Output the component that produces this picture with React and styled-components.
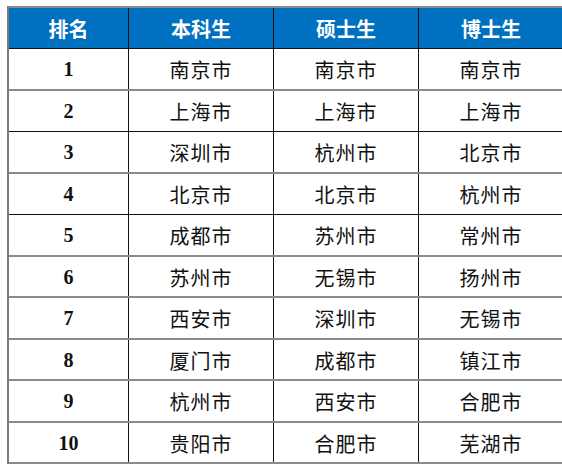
import React from 'react';
import styled, { createGlobalStyle } from 'styled-components';

const GlobalStyle = createGlobalStyle`
  html, body {
    margin: 0;
    padding: 0;
    background: #ffffff;
    overflow: hidden;
  }
  body {
    padding: 6px 0 0 7px;
  }
`;

const rows = [
  ['1', '南京市', '南京市', '南京市'],
  ['2', '上海市', '上海市', '上海市'],
  ['3', '深圳市', '杭州市', '北京市'],
  ['4', '北京市', '北京市', '杭州市'],
  ['5', '成都市', '苏州市', '常州市'],
  ['6', '苏州市', '无锡市', '扬州市'],
  ['7', '西安市', '深圳市', '无锡市'],
  ['8', '厦门市', '成都市', '镇江市'],
  ['9', '杭州市', '西安市', '合肥市'],
  ['10', '贵阳市', '合肥市', '芜湖市'],
];

// a few row rules print darker than the rest in the source
const darkRules = [1, 3];

const Table = styled.div`
  width: 557px;
  border-left: 2px solid #7a7a7a;
  box-sizing: border-box;
`;

const Row = styled.div`
  display: grid;
  grid-template-columns: 120px 145px 145px 145px;
  height: ${p => p.$h}px;
  box-sizing: border-box;
  border-bottom: ${p => (p.$dark ? '1px solid #111111' : '2px solid #8a8a8a')};
`;

const HeadRow = styled(Row)`
  background: #0070c0;
  border-top: 2px solid #8a8a8a;
  border-bottom: 1px solid #111111;
`;

const Cell = styled.div`
  display: flex;
  align-items: center;
  justify-content: center;
  border-right: 1px solid #111111;
  font-family: ${p => (p.$num ? '"Liberation Serif", serif' : '"Noto Sans CJK SC", sans-serif')};
  font-weight: ${p => (p.$num ? 700 : 400)};
  font-size: ${p => (p.$num ? '20px' : '20px')};
  color: #111111;
  letter-spacing: ${p => (p.$num ? '0' : '1px')};
  padding-top: 1px;
`;

const HeadCell = styled(Cell)`
  font-family: "Noto Sans CJK SC", sans-serif;
  font-weight: 700;
  font-size: 20px;
  color: #ffffff;
  letter-spacing: 0;
  padding-top: 0;
`;

export default function App() {
  return (
    <>
      <GlobalStyle />
      <Table>
        <HeadRow $h={43}>
          <HeadCell>排名</HeadCell>
          <HeadCell>本科生</HeadCell>
          <HeadCell>硕士生</HeadCell>
          <HeadCell>博士生</HeadCell>
        </HeadRow>
        {rows.map((r, i) => (
          <Row key={r[0]} $h={i % 2 === 0 ? 42 : 41} $dark={darkRules.includes(i)}>
            <Cell $num>{r[0]}</Cell>
            <Cell>{r[1]}</Cell>
            <Cell>{r[2]}</Cell>
            <Cell>{r[3]}</Cell>
          </Row>
        ))}
      </Table>
    </>
  );
}
